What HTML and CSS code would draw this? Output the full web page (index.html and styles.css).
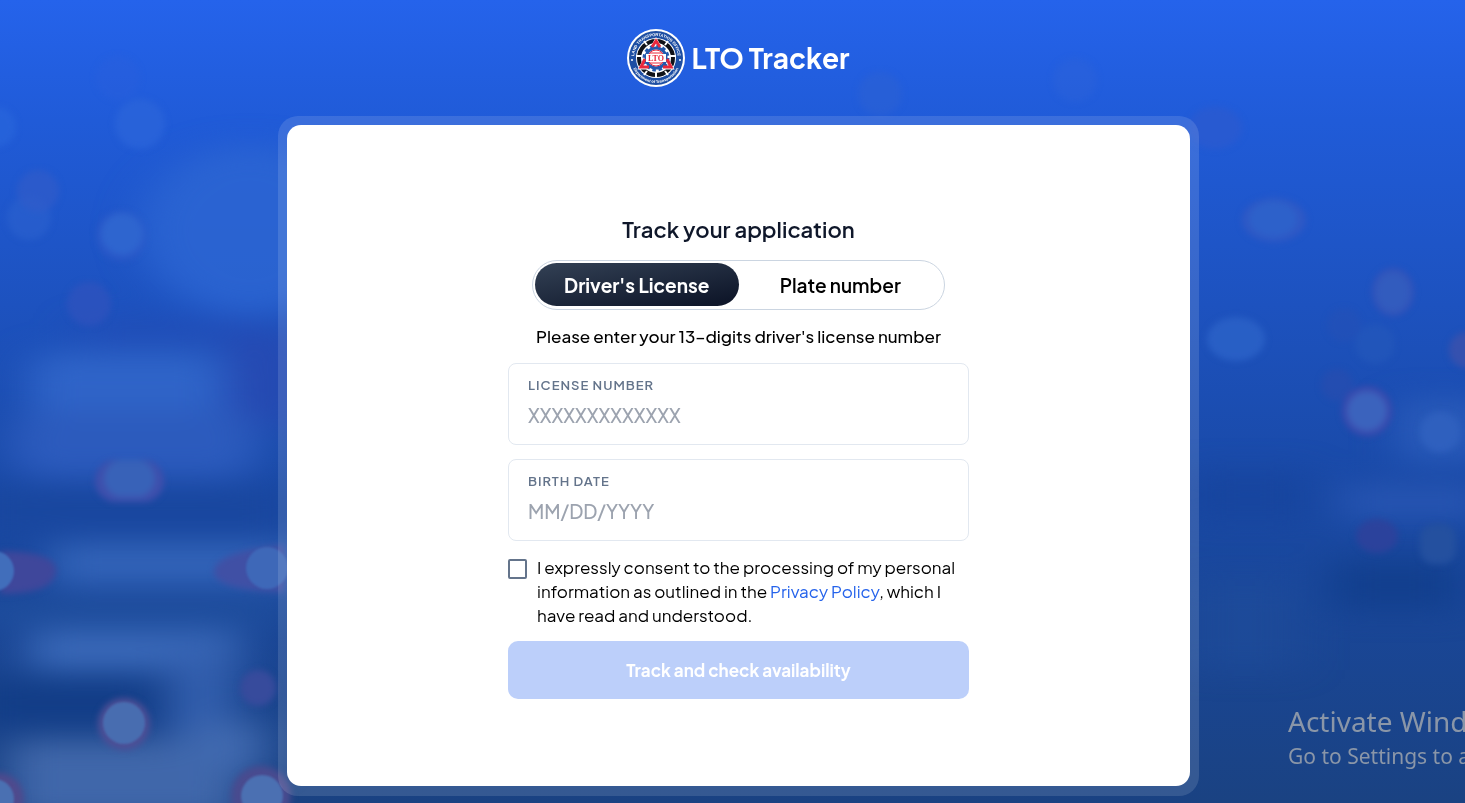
FILE: index.html
```html
<!DOCTYPE html>
<html lang="en">
<head>
	<meta charset="UTF-8">
	<meta name="viewport" content="width=device-width, initial-scale=1">
	<title>LTO Tracker</title>

	<link rel="stylesheet" href="styles.css">
</head>
<body>

	<svg class="backdrop" viewBox="0 0 1465 803" preserveAspectRatio="none" aria-hidden="true">
		<defs>
			<filter id="haze" x="-60%" y="-80%" width="220%" height="260%" color-interpolation-filters="sRGB"><feGaussianBlur stdDeviation="22 14"/></filter>
			<filter id="soft" x="-50%" y="-50%" width="200%" height="200%" color-interpolation-filters="sRGB"><feGaussianBlur stdDeviation="3"/></filter>
			<filter id="edge" x="-50%" y="-50%" width="200%" height="200%" color-interpolation-filters="sRGB"><feGaussianBlur stdDeviation="1"/></filter>
		</defs>
		<!-- blurred shapes of the traffic -->
		<g filter="url(#haze)">
			<ellipse cx="250" cy="230" rx="110" ry="85" fill="#2d66d3" opacity=".8"/>
			<rect x="80" y="322" width="200" height="20" fill="#234cb6" opacity=".8"/>
			<rect x="228" y="335" width="70" height="90" fill="#2848b2" opacity=".8"/>
			<rect x="30" y="352" width="195" height="100" rx="20" fill="#2f64c8"/>
			<rect x="10" y="410" width="250" height="68" rx="30" fill="#2c5bbd"/>
			<rect x="-30" y="488" width="320" height="48" fill="#19479f"/>
			<rect x="50" y="542" width="250" height="44" fill="#3263b8"/>
			<rect x="-30" y="602" width="320" height="20" fill="#20509f"/>
			<rect x="30" y="630" width="210" height="40" fill="#3a69b9"/>
			<rect x="170" y="650" width="65" height="90" fill="#335fae"/>
			<rect x="-30" y="680" width="190" height="46" fill="#123d87"/>
			<rect x="10" y="740" width="230" height="80" fill="#4067aa"/>
			<rect x="190" y="722" width="75" height="50" fill="#4069af"/>
			<rect x="1190" y="470" width="120" height="50" fill="#15439b" opacity=".6"/>
			<rect x="1340" y="485" width="150" height="34" fill="#2755b2"/>
			<rect x="1400" y="400" width="90" height="60" fill="#2a5bba"/>
			<rect x="1330" y="560" width="130" height="50" fill="#103d8b" opacity=".8"/>
			<rect x="1190" y="580" width="110" height="90" fill="#1f4d9b" opacity=".5"/>
		</g>
		<!-- out of focus lights -->
		<g filter="url(#soft)">
			<circle cx="-4" cy="127" r="20" fill="#2a68dc" opacity=".6"/>
			<circle cx="118" cy="78" r="22" fill="#2b60dc" opacity=".4"/>
			<circle cx="140" cy="124" r="25" fill="#2b64da" opacity=".8"/>
			<circle cx="29" cy="218" r="22" fill="#2960cd" opacity=".7"/>
			<circle cx="38" cy="191" r="21" fill="#305bc9" opacity=".7"/>
			<circle cx="121" cy="236" r="25" fill="#3058c8" opacity=".6"/>
			<circle cx="122" cy="234" r="21" fill="#2e65cf"/>
			<circle cx="89" cy="304" r="22" fill="#3152be" opacity=".7"/>
			<circle cx="880" cy="94" r="22" fill="#2c60d4" opacity=".6"/>
			<circle cx="1075" cy="80" r="22" fill="#2b62da" opacity=".5"/>
			<ellipse cx="1215" cy="128" rx="27" ry="21" fill="#2b5ad0" opacity=".8"/>
			<ellipse cx="1274" cy="220" rx="32" ry="22" fill="#3159c4" opacity=".9"/>
			<ellipse cx="1273" cy="219" rx="24" ry="18" fill="#2d61ca"/>
			<ellipse cx="1393" cy="292" rx="21" ry="24" fill="#3853b8" opacity=".8"/>
			<ellipse cx="1393" cy="292" rx="17" ry="20" fill="#325cbe"/>
			<ellipse cx="1236" cy="339" rx="29" ry="22" fill="#2a60c7" opacity=".9"/>
			<circle cx="1375" cy="344" r="20" fill="#2558bb" opacity=".6"/>
			<circle cx="1344" cy="325" r="17" fill="#2850b4" opacity=".4"/>
			<circle cx="1337" cy="385" r="16" fill="#2c4cae" opacity=".5"/>
			<circle cx="1467" cy="350" r="18" fill="#3c51ac" opacity=".8"/>
			<circle cx="1367" cy="411" r="25" fill="#3b49ad"/>
			<circle cx="1367" cy="411" r="20" fill="#3b63bd"/>
			<circle cx="1440" cy="432" r="20" fill="#2f60be"/>
			<ellipse cx="1377" cy="536" rx="21" ry="17" fill="#2d419b" opacity=".9"/>
			<rect x="1420" y="524" width="36" height="40" rx="14" fill="#24509f"/>
			<rect x="95" y="460" width="69" height="42" rx="21" fill="#3f4fac"/>
			<rect x="104" y="460" width="51" height="37" rx="18" fill="#3862b8"/>
			<path d="M0 551 Q60 552 56 573 Q52 594 0 594Z" fill="#3f479b"/>
			<path d="M284 545 Q214 552 214 572 Q214 590 284 592Z" fill="#4050a5"/>
			<circle cx="258" cy="688" r="18" fill="#374b9c"/>
			<circle cx="124" cy="724" r="26" fill="#4d4f96"/>
			<circle cx="-2" cy="799" r="26" fill="#4f4a8d"/>
			<circle cx="261" cy="796" r="30" fill="#494b8f"/>
		</g>
		<g filter="url(#edge)">
			<circle cx="-6" cy="571" r="20" fill="#416ebb"/>
			<circle cx="267" cy="568" r="21" fill="#3e68b8"/>
			<circle cx="124" cy="723" r="21" fill="#486db0"/>
			<circle cx="-6" cy="799" r="20" fill="#4a70b2"/>
			<circle cx="262" cy="796" r="21" fill="#4b70b2"/>
		</g>
	</svg>

	<div class="page">
		<header class="logo">
			<svg class="seal" viewBox="0 0 58 58" role="img" aria-label="Land Transportation Office seal">
				<defs>
					<path id="arcTop" d="M7 29 A22 22 0 0 1 51 29"/>
					<path id="arcBottom" d="M4 29 A25 25 0 0 0 54 29"/>
				</defs>
				<circle cx="29" cy="29" r="29" fill="#fff"/>
				<circle cx="29" cy="29" r="27" fill="#1d4ea3"/>
				<circle cx="29" cy="29" r="20" fill="#fff"/>
				<circle cx="29" cy="29" r="17" fill="none" stroke="#101218" stroke-width="4"/>
				<path d="M29 41v8M9 27h6M43 27h6M17 12l3 4M17 46l3-4M38 42l3 4M38 16l3-4" stroke="#fff" stroke-width="2"/>
				<path d="M29 11 45 39H13Z" fill="#fff" stroke="#fff" stroke-width="3"/>
				<!-- gear -->
				<circle cx="29" cy="29" r="12" fill="none" stroke="#2358ad" stroke-width="3" stroke-dasharray="3.500 2.780"/>
				<circle cx="29" cy="29" r="10" fill="none" stroke="#2358ad" stroke-width="3"/>
				<!-- corners of the triangle -->
				<path d="M25 18 29 12 33 18M18 30 14 38H22M40 30 44 38H36" fill="none" stroke="#e9283c" stroke-width="3"/>
				<circle cx="29" cy="29" r="8" fill="#fff" stroke="#e9283c"/>
				<path d="M23 24h12M23 34h12" stroke="#e9283c"/>
				<rect x="19" y="25" width="20" height="8" fill="#fff"/>
				<text class="seal-name" x="29" y="32" text-anchor="middle">LTO</text>
				<circle cx="5" cy="31" r="1" fill="#fff"/>
				<circle cx="53" cy="31" r="1" fill="#fff"/>
				<text class="seal-ring"><textPath href="#arcTop" startOffset="50%" text-anchor="middle">LAND TRANSPORTATION OFFICE</textPath></text>
				<text class="seal-ring"><textPath href="#arcBottom" startOffset="50%" text-anchor="middle">Department of Transportation</textPath></text>
			</svg>
			<span class="logo-name">LTO Tracker</span>
		</header>

		<main class="frame">
			<div class="card">
				<form class="form">
					<h1>Track your application</h1>

					<div class="tabs">
						<button type="button" class="tab active">Driver's License</button>
						<button type="button" class="tab">Plate number</button>
					</div>

					<p class="hint">Please enter your 13–digits driver's license number</p>

					<div class="field">
						<label for="license">License number</label>
						<input type="text" id="license" placeholder="XXXXXXXXXXXXX">
					</div>
					<div class="field">
						<label for="birthdate">Birth date</label>
						<input type="text" id="birthdate" placeholder="MM/DD/YYYY">
					</div>

					<div class="consent">
						<input type="checkbox" id="consent">
						<label for="consent">I expressly consent to the processing of my personal information as outlined in the <a href="#">Privacy Policy</a>, which I have read and understood.</label>
					</div>

					<button type="submit" class="submit" disabled>Track and check availability</button>
				</form>
			</div>
		</main>
	</div>

	<div class="watermark">
		<div class="watermark-title">Activate Wind</div>
		<div>Go to Settings to a</div>
	</div>

</body>
</html>
```
FILE: styles.css
```css
* {
	box-sizing: border-box;
}

body {
	margin: 0;
	min-height: 100vh;
	position: relative;
	overflow: hidden;
	font-family: "Plus Jakarta Sans", Inter, "Liberation Sans", sans-serif;
	color: #000;
	background: linear-gradient(180deg, #2563eb 0%, #205bd8 15%, #1d52bf 38%, #1949a5 62%, #1a4282 100%);
}

.backdrop {
	position: absolute;
	top: 0;
	left: 0;
	width: 100%;
	height: 100%;
}

.page {
	position: relative;
	min-height: 100vh;
	padding: 29px 0 7px 12px;
	display: flex;
	flex-direction: column;
	align-items: center;
	gap: 29px;
}

.logo {
	display: flex;
	align-items: center;
	gap: 6px;
	color: #fff;
}

.seal {
	width: 58px;
	height: 58px;
}

.seal-name {
	font: bold 8px "Liberation Serif", serif;
	fill: #e9283c;
}

.seal-ring {
	font: bold 4px "Liberation Sans", sans-serif;
	fill: #fff;
}

.logo-name {
	font-size: 28px;
	line-height: 36px;
	font-weight: 700;
}

.frame {
	flex: 1;
	display: flex;
	width: 100%;
	max-width: 921px;
	padding: 9px 9px 10px;
	border-radius: 20px;
	background: rgba(255, 255, 255, 0.12);
}

.card {
	flex: 1;
	display: flex;
	align-items: center;
	justify-content: center;
	padding: 20px;
	border-radius: 14px;
	background: #fff;
}

.form {
	width: 100%;
	max-width: 461px;
	display: flex;
	flex-direction: column;
	gap: 14px;
}

h1 {
	margin: 0;
	font-size: 22px;
	line-height: 34px;
	font-weight: 600;
	text-align: center;
	color: #0f172a;
}

.tabs {
	display: flex;
	margin: 0 24px;
	padding: 2px;
	height: 50px;
	border: 1px solid #cbd5e1;
	border-radius: 25px;
}

.tab {
	flex: 1;
	margin: 0 0 1px;
	padding: 0;
	border: 0;
	border-radius: 22px;
	background: transparent;
	font-family: inherit;
	font-size: 19px;
	font-weight: 600;
	color: #000;
	cursor: pointer;
}

.tab.active {
	background: linear-gradient(170deg, #334155, #0f172a 90%);
	font-weight: 700;
	color: #fff;
}

.hint {
	margin: 0;
	font-size: 17px;
	line-height: 25px;
	font-weight: 500;
	text-align: center;
	white-space: nowrap;
}

.field {
	display: flex;
	flex-direction: column;
	height: 82px;
	padding: 11px 19px 9px;
	border: 1px solid #e2e8f0;
	border-radius: 8px;
}

.field label {
	font-size: 13px;
	line-height: 20px;
	font-weight: 600;
	letter-spacing: 1px;
	text-transform: uppercase;
	color: #64748b;
}

.field input {
	width: 100%;
	height: 40px;
	padding: 0;
	border: 0;
	outline: none;
	background: transparent;
	font-family: inherit;
	font-size: 19px;
	font-weight: 500;
	color: #000;
}

.field input::placeholder {
	color: #9ca3af;
	opacity: 1;
}

.consent {
	display: flex;
	align-items: flex-start;
	gap: 10px;
	font-size: 17px;
	line-height: 24px;
}

.consent input {
	appearance: none;
	flex: none;
	width: 19px;
	height: 20px;
	margin: 4px 0 0;
	border: 2px solid #64748b;
	border-radius: 2px;
	background: #fff;
}

.consent input:checked {
	background: #2563eb;
}

.consent a {
	color: #2563eb;
	text-decoration: none;
}

.submit {
	height: 58px;
	border: 0;
	border-radius: 10px;
	background: #bccffa;
	font-family: inherit;
	font-size: 17px;
	font-weight: 700;
	color: #fff;
}

.watermark {
	position: absolute;
	right: 0;
	bottom: 32px;
	width: 177px;
	overflow: hidden;
	white-space: nowrap;
	font-family: "Segoe UI", "Noto Sans", sans-serif;
	font-size: 21px;
	line-height: 30px;
	color: #8a96a8;
	pointer-events: none;
}

.watermark-title {
	font-size: 28px;
	line-height: 40px;
}
```
